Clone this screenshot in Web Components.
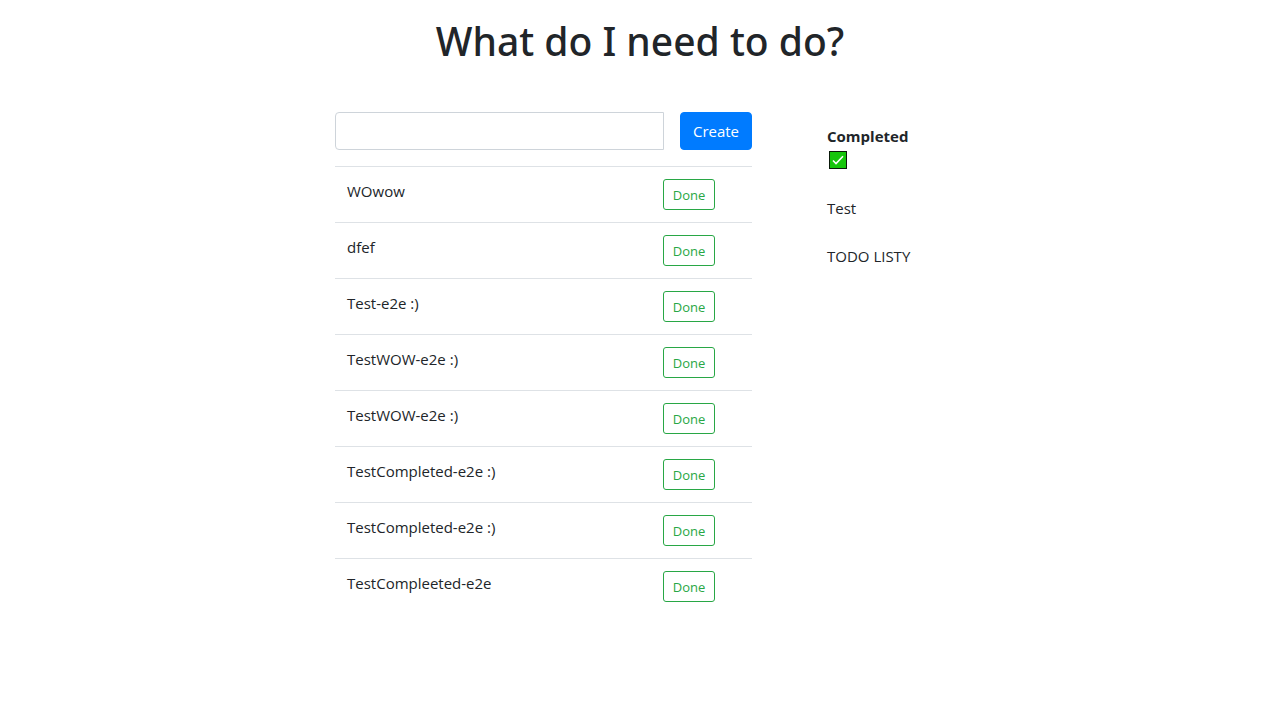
<!DOCTYPE html>
<html lang="en">
<head>
<meta charset="utf-8">
<meta name="viewport" content="width=device-width, initial-scale=1">
<title>What do I need to do?</title>
<style>
  body { margin: 0; background: #fff; color: #212529; font: 15px/24px "Open Sans", "Noto Sans", sans-serif; }
</style>
</head>
<body>
<todo-app></todo-app>
<script>
class Base extends HTMLElement {
  constructor() {
    super();
    this.attachShadow({ mode: "open" }).innerHTML =
      "<style>*, *::before, *::after { box-sizing: border-box; } :host { display: block; box-sizing: border-box; }</style>" + this.render();
  }
}

customElements.define("todo-form", class extends Base {
  render() {
    return `<style>
      form { display: flex; gap: 16px; margin: 0; }
      input { flex: 1; min-width: 0; height: 38px; padding: 6px 12px; font: inherit; color: #495057;
        background: #fff; border: 1px solid #ced4da; border-radius: 4px 0 0 4px; }
      button { width: 72px; height: 38px; padding: 0; font: inherit; color: #fff; background: #007bff;
        border: 1px solid #007bff; border-radius: 4px; cursor: pointer; }
    </style>
    <form onsubmit="return false"><input type="text" aria-label="New task"><button type="submit">Create</button></form>`;
  }
});

customElements.define("done-button", class extends Base {
  render() {
    return `<style>
      button { display: block; width: 52px; height: 31px; padding: 0; font: inherit; font-size: 13px; line-height: 20px;
        color: #28a745; background: transparent; border: 1px solid #28a745; border-radius: 3px; cursor: pointer; }
    </style>
    <button type="button"><slot></slot></button>`;
  }
});

customElements.define("todo-list", class extends Base {
  render() {
    const items = ["WOwow", "dfef", "Test-e2e :)", "TestWOW-e2e :)", "TestWOW-e2e :)",
      "TestCompleted-e2e :)", "TestCompleted-e2e :)", "TestCompleeted-e2e"];
    return `<style>
      table { width: 100%; border-spacing: 0; table-layout: fixed; }
      td { padding: 12px; vertical-align: top; border-top: 1px solid #dee2e6; }
      .action { width: 101px; }
    </style>
    <table><colgroup><col><col class="action"></colgroup><tbody>${
      items.map(t => `<tr><td>${t}</td><td><done-button>Done</done-button></td></tr>`).join("")
    }</tbody></table>`;
  }
});

customElements.define("check-mark", class extends Base {
  render() {
    return `<style>
      :host { display: flex; align-items: center; height: 24px; padding-left: 2px; }
      svg { display: block; }
    </style>
    <svg width="18" height="18" viewBox="0 0 18 18" role="img" aria-label="Done">
      <rect width="18" height="18" fill="#0a1a0a"/>
      <rect x="1" y="1" width="16" height="16" fill="#16c60c"/>
      <path d="M4 9.5 7 12.5 14 5.2" fill="none" stroke="#fff" stroke-width="1.6"/>
    </svg>`;
  }
});

customElements.define("completed-list", class extends Base {
  render() {
    return `<style>
      :host { padding-top: 12px; }
      h2 { margin: 0; font: inherit; font-weight: 700; }
      ul { display: grid; gap: 24px; margin: 24px 0 0; padding: 0; list-style: none; }
    </style>
    <h2>Completed</h2><check-mark></check-mark>
    <ul><li>Test</li><li>TODO LISTY</li></ul>`;
  }
});

customElements.define("todo-app", class extends Base {
  render() {
    return `<style>
      h1 { margin: 0; padding: 16px 0 46px; text-align: center; font-family: "Noto Sans", "Open Sans", sans-serif;
        font-size: 39px; line-height: 50px; font-weight: 500; }
      main { display: grid; grid-template-columns: minmax(0, 1fr) 118px; gap: 75px; align-items: start;
        width: 50%; min-width: 480px; margin: 0 auto; padding: 0 15px; box-sizing: border-box; }
      section { display: grid; gap: 16px; }
    </style>
    <h1>What do I need to do?</h1>
    <main><section><todo-form></todo-form><todo-list></todo-list></section><completed-list></completed-list></main>`;
  }
});
</script>
</body>
</html>
